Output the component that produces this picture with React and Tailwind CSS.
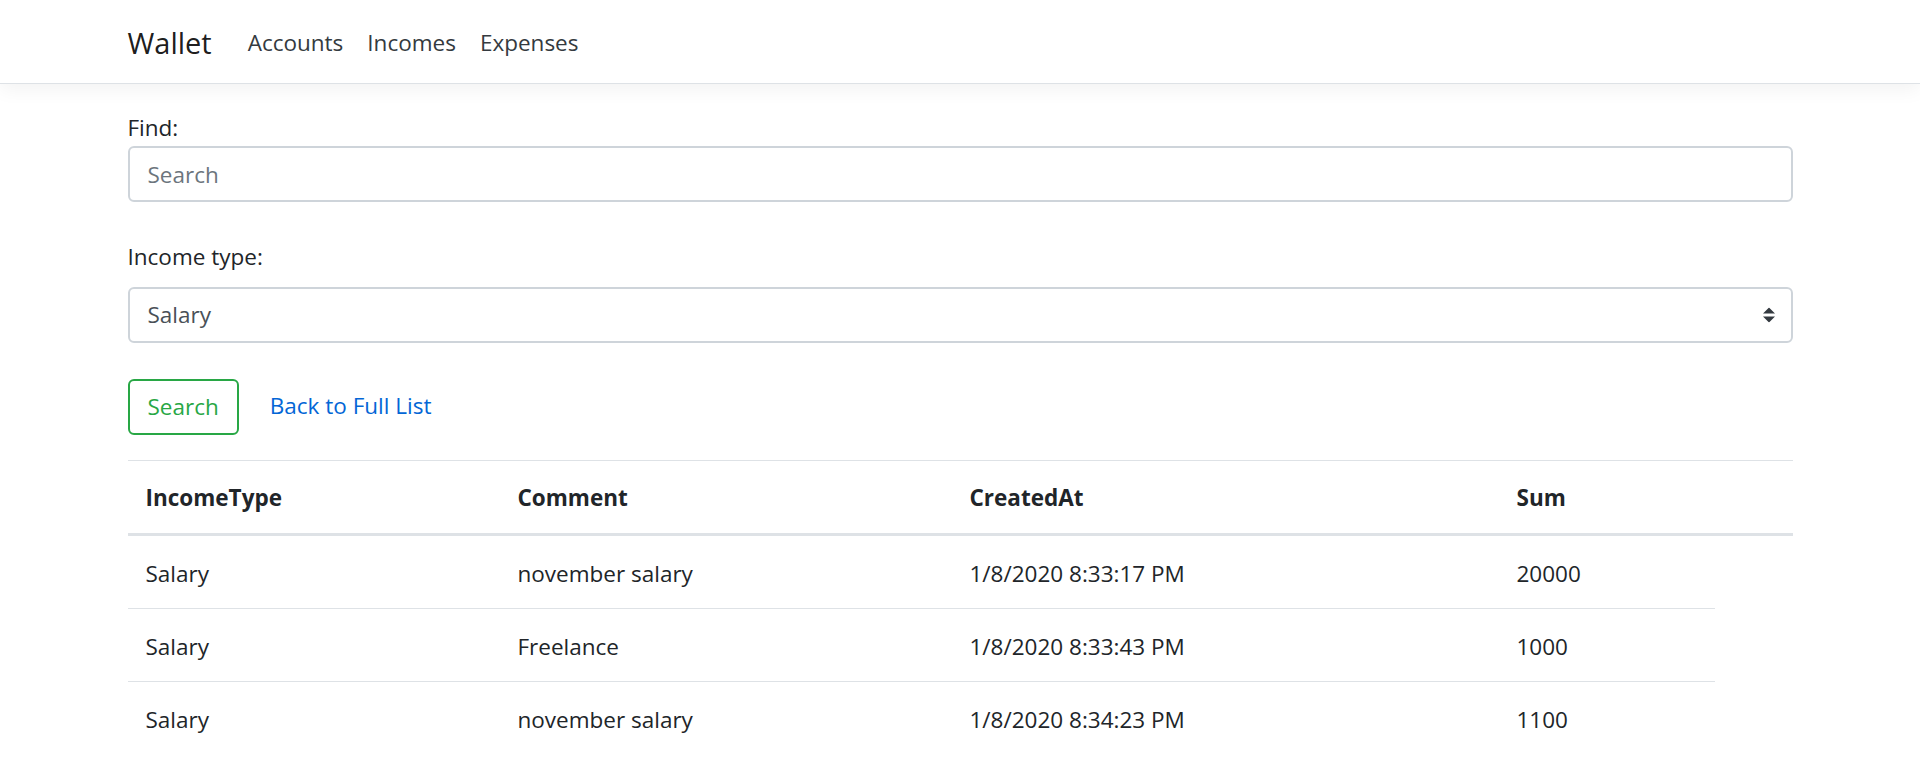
import React from 'react';

const incomes = [
  { id: 1, type: 'Salary', comment: 'november salary', createdAt: '1/8/2020 8:33:17 PM', sum: 20000 },
  { id: 2, type: 'Salary', comment: 'Freelance', createdAt: '1/8/2020 8:33:43 PM', sum: 1000 },
  { id: 3, type: 'Salary', comment: 'november salary', createdAt: '1/8/2020 8:34:23 PM', sum: 1100 },
];

const SelectArrows = () => (
  <svg width="12" height="15" viewBox="0 0 4 5" className="absolute right-[18px] top-1/2 -translate-y-1/2 pointer-events-none">
    <path fill="#343a40" d="M2 0L0 2h4zm0 5L0 3h4z" />
  </svg>
);

const App = () => {
  return (
    <div className="min-h-[777px] bg-white text-[#212529] font-['Open_Sans','Noto_Sans',sans-serif] text-[22.5px] leading-[36px]">
      <nav className="h-[84px] bg-white border-b border-[#dee2e6] shadow-[0_6px_18px_rgba(0,0,0,0.05)]">
        <div className="w-[1665px] mx-auto h-[83px] flex items-center pt-[2px]">
          <a href="#" className="text-[29px] leading-[45px] text-black/90 mr-[24px]">Wallet</a>
          <ul className="flex">
            <li><a href="#" className="block px-[12px] py-[12px] text-[#343a40]">Accounts</a></li>
            <li><a href="#" className="block px-[12px] py-[12px] text-[#343a40]">Incomes</a></li>
            <li><a href="#" className="block px-[12px] py-[12px] text-[#343a40]">Expenses</a></li>
          </ul>
        </div>
      </nav>

      <main className="w-[1665px] mx-auto pt-[26px]">
        <form onSubmit={(e) => e.preventDefault()}>
          <label className="block">Find:</label>
          <input
            type="text"
            placeholder="Search"
            className="block w-full h-[56px] px-[18px] border-2 border-[#ced4da] rounded-[6px] text-[#495057] placeholder:text-[#6c757d] outline-none"
          />

          <label className="block mt-[37px]">Income type:</label>
          <div className="relative mt-[12px]">
            <select className="block w-full h-[56px] pl-[18px] pr-[40px] border-2 border-[#ced4da] rounded-[6px] text-[#495057] bg-white appearance-none outline-none">
              <option>Salary</option>
            </select>
            <SelectArrows />
          </div>

          <div className="flex items-center mt-[36px]">
            <button type="submit" className="h-[56px] px-[18px] border-2 border-[#28a745] rounded-[6px] text-[#28a745] bg-white">
              Search
            </button>
            <a href="#" className="ml-[31px] -mt-[3px] text-[#0366d6]">Back to Full List</a>
          </div>
        </form>

        <table className="w-full mt-[25px] border-collapse table-fixed">
          <colgroup>
            <col className="w-[372px]" />
            <col className="w-[452px]" />
            <col className="w-[547px]" />
            <col className="w-[216px]" />
            <col className="w-[78px]" />
          </colgroup>
          <thead>
            <tr>
              <th className="text-left font-bold px-[18px] pt-[19px] pb-[17px] border-t border-[#dee2e6] border-b-[3px] border-b-[#dee2e6]">IncomeType</th>
              <th className="text-left font-bold px-[18px] pt-[19px] pb-[17px] border-t border-[#dee2e6] border-b-[3px] border-b-[#dee2e6]">Comment</th>
              <th className="text-left font-bold px-[18px] pt-[19px] pb-[17px] border-t border-[#dee2e6] border-b-[3px] border-b-[#dee2e6]">CreatedAt</th>
              <th className="text-left font-bold px-[18px] pt-[19px] pb-[17px] border-t border-[#dee2e6] border-b-[3px] border-b-[#dee2e6]">Sum</th>
              <th className="px-[18px] pt-[19px] pb-[17px] border-t border-[#dee2e6] border-b-[3px] border-b-[#dee2e6]"></th>
            </tr>
          </thead>
          <tbody>
            {incomes.map((row, idx) => (
              <tr key={row.id}>
                <td className={`px-[18px] pt-[20px] pb-[16px] ${idx > 0 ? 'border-t border-[#dee2e6]' : ''}`}>{row.type}</td>
                <td className={`px-[18px] pt-[20px] pb-[16px] ${idx > 0 ? 'border-t border-[#dee2e6]' : ''}`}>{row.comment}</td>
                <td className={`px-[18px] pt-[20px] pb-[16px] ${idx > 0 ? 'border-t border-[#dee2e6]' : ''}`}>{row.createdAt}</td>
                <td className={`px-[18px] pt-[20px] pb-[16px] ${idx > 0 ? 'border-t border-[#dee2e6]' : ''}`}>{row.sum}</td>
              </tr>
            ))}
          </tbody>
        </table>
      </main>
    </div>
  );
};

export default App;
